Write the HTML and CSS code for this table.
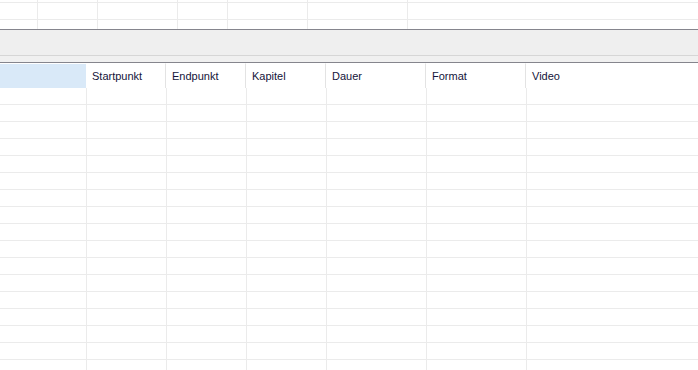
FILE: index.html
```html
<!DOCTYPE html>
<html lang="de">
<head>
<meta charset="utf-8">
<title>Kapitelliste</title>
<link rel="stylesheet" href="styles.css">
</head>
<body>
  <div class="upper-grid">
    <div class="ug-row ug-row-a">
      <div class="ug-cell w38"></div><div class="ug-cell w60"></div><div class="ug-cell w80"></div><div class="ug-cell w50"></div><div class="ug-cell w80"></div><div class="ug-cell w100"></div><div class="ug-cell ug-rest"></div>
    </div>
    <div class="ug-row ug-row-b">
      <div class="ug-cell w38"></div><div class="ug-cell w60"></div><div class="ug-cell w80"></div><div class="ug-cell w50"></div><div class="ug-cell w80"></div><div class="ug-cell w100"></div><div class="ug-cell ug-rest"></div>
    </div>
    <div class="ug-row ug-row-c">
      <div class="ug-cell w38"></div><div class="ug-cell w60"></div><div class="ug-cell w80"></div><div class="ug-cell w50"></div><div class="ug-cell w80"></div><div class="ug-cell w100"></div><div class="ug-cell ug-rest"></div>
    </div>
  </div>

  <div class="toolbar"></div>
  <div class="splitter"></div>

  <div class="chapters">
    <div class="ch-head">
      <div class="hcell hcell-corner"></div>
      <div class="hcell sep w80">Startpunkt</div>
      <div class="hcell sep w80">Endpunkt</div>
      <div class="hcell sep w80">Kapitel</div>
      <div class="hcell sep w100">Dauer</div>
      <div class="hcell sep w100">Format</div>
      <div class="hcell hcell-last">Video</div>
    </div>
    <div class="ch-body" id="rows"></div>
  </div>

  <script src="app.js"></script>
</body>
</html>
```

FILE: app.js
```js
// Fill the chapter list with empty rows
(function () {
  var body = document.getElementById('rows');
  var widths = ['c0', 'w80', 'w80', 'w80', 'w100', 'w100', 'rest'];
  for (var r = 0; r < 17; r++) {
    var row = document.createElement('div');
    row.className = 'ch-row';
    widths.forEach(function (w) {
      var c = document.createElement('div');
      c.className = 'bcell ' + w;
      row.appendChild(c);
    });
    body.appendChild(row);
  }
})();
```

FILE: styles.css
```css
* { box-sizing: border-box; }

html, body {
  margin: 0;
  padding: 0;
  background: #ffffff;
  overflow: hidden;
  width: 698px;
  height: 370px;
  font-family: "Liberation Sans", Arial, sans-serif;
  font-size: 11px;
  color: #14143a;
}

/* upper grid */
.upper-grid { height: 29px; display: flex; flex-direction: column; }
.ug-row { display: flex; }
.ug-row-a { height: 3px; border-bottom: 1px solid #ebebeb; }
.ug-row-b { height: 17px; border-bottom: 1px solid #ebebeb; }
.ug-row-c { height: 9px; }
.ug-cell { height: 100%; border-right: 1px solid #ebebeb; }
.ug-cell.ug-rest { flex: 1; border-right: none; }
.w38 { width: 38px; flex: none; }
.w50 { width: 50px; flex: none; }
.w60 { width: 60px; flex: none; }
.w80 { width: 80px; flex: none; }
.w100 { width: 100px; flex: none; }

/* toolbar strip between the grids */
.toolbar {
  height: 27px;
  background: #efefef;
  border-top: 1px solid #85858d;
  border-bottom: 1px solid #d6d6d6;
}
.splitter {
  height: 7px;
  background: #f0f0f0;
  border-bottom: 1px solid #85858d;
}

/* chapter list */
.ch-head { display: flex; height: 25px; }
.hcell {
  height: 100%;
  padding: 6px 0 0 6px;
  line-height: 13px;
  white-space: nowrap;
  border-top: 1px solid #ffffff;
}
.hcell.sep { border-right: 1px solid #e3e3e3; }
.hcell-corner {
  width: 86px;
  flex: none;
  background: #d9e9f8;
}
.hcell-last { flex: 1; }

.ch-row { display: flex; height: 17px; border-bottom: 1px solid #ebebeb; }
.bcell { height: 100%; border-right: 1px solid #ebebeb; }
.bcell.c0 { width: 87px; flex: none; }
.bcell.rest { flex: 1; border-right: none; }
```
